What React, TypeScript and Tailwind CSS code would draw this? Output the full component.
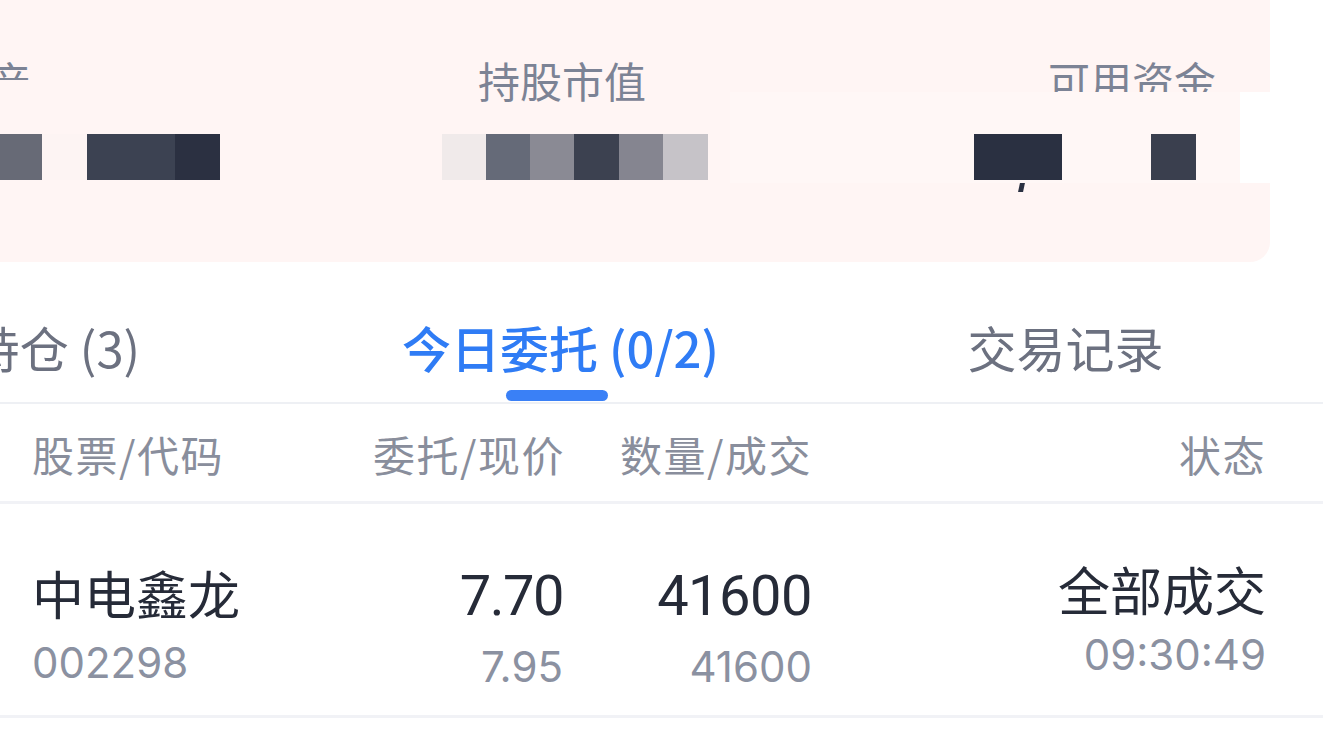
const cjk = "font-['Noto_Sans_CJK_SC',sans-serif]";

type Block = { w: number; c: string };

const totalBlocks: Block[] = [
  { w: 44, c: "bg-[#c6c3c8]" },
  { w: 44, c: "bg-[#3c4150]" },
  { w: 44, c: "bg-[#676a76]" },
  { w: 45, c: "bg-[#fdf4f3]" },
  { w: 44, c: "bg-[#3c4252]" },
  { w: 44, c: "bg-[#3c4252]" },
  { w: 45, c: "bg-[#2b3041]" },
];

const marketBlocks: Block[] = [
  { w: 44, c: "bg-[#f0eaea]" },
  { w: 44, c: "bg-[#656a78]" },
  { w: 44, c: "bg-[#8a8a94]" },
  { w: 45, c: "bg-[#3c4150]" },
  { w: 44, c: "bg-[#858590]" },
  { w: 45, c: "bg-[#c6c3c8]" },
];

const cashBlocks: Block[] = [
  { w: 88, c: "bg-[#2a3041]" },
  { w: 89, c: "bg-transparent" },
  { w: 45, c: "bg-[#3a3f4e]" },
];

function Mosaic({ blocks, offset = 0 }: { blocks: Block[]; offset?: number }) {
  return (
    <div className="relative z-10 mt-[33px] flex h-[46px]" style={{ marginLeft: offset }}>
      {blocks.map((b, i) => (
        <div key={i} className={`h-full ${b.c}`} style={{ width: b.w }} />
      ))}
    </div>
  );
}

const tabs = [
  { label: "持仓 (3)", active: false },
  { label: "今日委托 (0/2)", active: true },
  { label: "交易记录", active: false },
];

export default function App() {
  return (
    <div className={`relative h-[737px] w-[1323px] overflow-hidden bg-white ${cjk}`}>
      {/* asset summary card */}
      <div className="relative -ml-[230px] flex h-[262px] w-[1500px] rounded-br-[20px] bg-[#fff5f4] pt-[59px]">
        {/* redaction bands */}
        <div className="absolute left-[230px] top-[80px] z-[5] h-[45px] w-[80px] bg-[#fff5f4]" />
        <div className="absolute left-[960px] top-[92px] z-[5] h-[91px] w-[510px] bg-[#fff7f6]" />
        <div className="absolute left-[1470px] top-[92px] z-[5] h-[91px] w-[30px] bg-white" />
        <div className="absolute left-[1249px] top-[183px] z-[5] h-[9px] w-[5px] -skew-x-12 bg-[#2a3041]" />

        <div className="ml-[135px] flex w-[537px] shrink-0 flex-col">
          <div className="text-[42px] leading-none text-[#7c8395]">总资产</div>
          <Mosaic blocks={totalBlocks} offset={5} />
        </div>
        <div className="flex w-[532px] shrink-0 flex-col">
          <div className="ml-[36px] text-[42px] leading-none text-[#7c8395]">持股市值</div>
          <Mosaic blocks={marketBlocks} />
        </div>
        <div className="flex flex-1 flex-col">
          <div className="ml-[74px] text-[42px] leading-none text-[#7c8395]">可用资金</div>
          <Mosaic blocks={cashBlocks} />
        </div>
      </div>

      {/* tabs */}
      <div className="-ml-[197px] flex h-[140px]">
        {tabs.map((t) => (
          <div key={t.label} className="flex w-[505px] shrink-0 flex-col items-center pt-[60px]">
            <div
              className={`whitespace-pre text-[49px] leading-none ${
                t.active ? "font-medium text-[#2f7cf5]" : "text-[#6c7180]"
              }`}
            >
              {t.label}
            </div>
            {t.active && <div className="mt-[19px] h-[11px] w-[102px] -translate-x-[4px] rounded-full bg-[#3a80f6]" />}
          </div>
        ))}
      </div>
      <div className="h-[2px] bg-[#eef0f4]" />

      {/* table header */}
      <div className="grid h-[97px] grid-cols-[341px_190px_249px_1fr] whitespace-nowrap pl-[32px] pr-[57px] pt-[29px] text-[42px] leading-none tracking-[1.5px] text-[#898e9c]">
        <div>股票/代码</div>
        <div className="text-right">委托/现价</div>
        <div className="text-right">数量/成交</div>
        <div className="text-right">状态</div>
      </div>
      <div className="h-[3px] bg-[#f1f2f6]" />

      {/* order row */}
      <div className="grid h-[211px] grid-cols-[341px_190px_249px_1fr] items-start pl-[32px] pr-[57px]">
        <div className="flex flex-col pt-[63px]">
          <div className="text-[52px] leading-none text-[#262b38]">中电鑫龙</div>
          <div className="mt-[23px] font-['Inter',sans-serif] text-[42px] leading-none text-[#8b91a1]">002298</div>
        </div>
        <div className="flex flex-col items-end pt-[64px]">
          <div className="font-['Roboto',sans-serif] text-[56px] leading-none tracking-[-1.5px] text-[#262b38]">7.70</div>
          <div className="mt-[22px] font-['Inter',sans-serif] text-[42px] leading-none text-[#8b91a1]">7.95</div>
        </div>
        <div className="flex flex-col items-end pt-[64px]">
          <div className="font-['Roboto',sans-serif] text-[56px] leading-none tracking-[-0.5px] text-[#262b38]">41600</div>
          <div className="mt-[22px] font-['Inter',sans-serif] text-[42px] leading-none text-[#8b91a1]">41600</div>
        </div>
        <div className="flex flex-col items-end pt-[59px]">
          <div className="text-[52px] leading-none text-[#262b38]">全部成交</div>
          <div className="mt-[19px] font-['Inter',sans-serif] text-[42px] leading-none text-[#8b91a1]">09:30:49</div>
        </div>
      </div>
      <div className="h-[3px] bg-[#f1f2f6]" />
    </div>
  );
}
